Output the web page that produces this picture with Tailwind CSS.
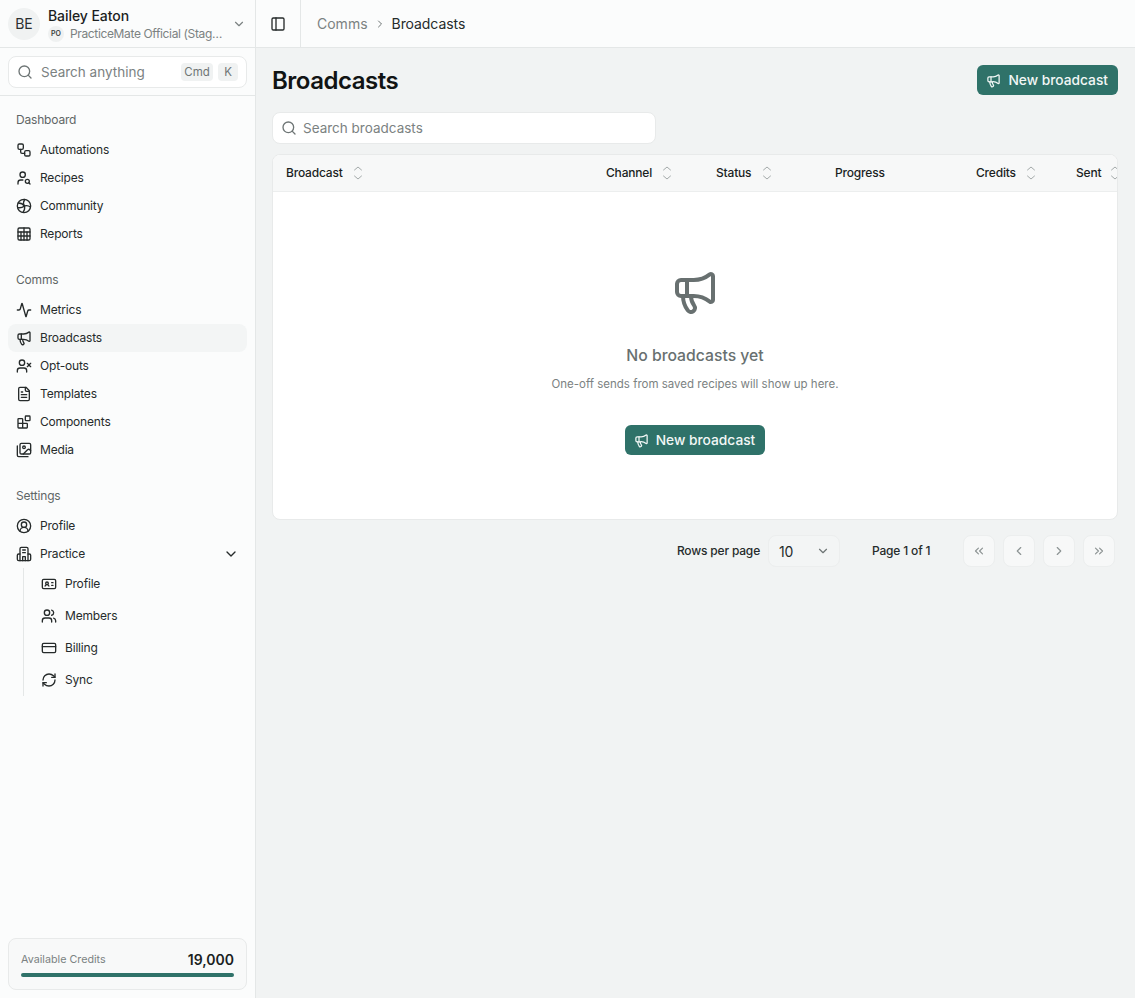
<!DOCTYPE html>
<html lang="en">
<head>
  <meta charset="UTF-8">
  <meta name="viewport" content="width=device-width, initial-scale=1.0">
  <title>Broadcasts</title>
  <script src="https://cdn.jsdelivr.net/npm/@tailwindcss/browser@4"></script>
</head>
<body class="bg-[#f1f3f3] text-[#1b1f1f] font-['Inter','Liberation_Sans',sans-serif] antialiased">
  <div class="flex h-[998px] w-[1135px] overflow-hidden">

    <!-- sidebar -->
    <aside class="flex w-[256px] shrink-0 flex-col border-r border-[#e4e7e7] bg-[#fbfcfc]">
      <div class="flex h-[48px] shrink-0 items-center border-b border-[#e4e7e7] pl-2 pr-[9px]">
        <div class="flex size-[32px] shrink-0 items-center justify-center rounded-full bg-[#f0f2f2] text-[14px] text-[#2b3030]">BE</div>
        <div class="ml-2 min-w-0 flex-1 pt-[3px]">
          <div class="text-[14px] leading-[16px] font-medium tracking-[-0.005em]">Bailey Eaton</div>
          <div class="mt-[2px] flex items-center">
            <span class="flex size-[16px] items-center justify-center rounded-full bg-[#eff1f1] text-[7px] font-semibold text-[#3a4040]">PO</span>
            <span class="ml-[6px] whitespace-nowrap text-[12px] leading-[16px] tracking-[-0.03em] text-[#7b8282]">PracticeMate Official (Stag…</span>
          </div>
        </div>
        <svg class="size-[14px] shrink-0 text-[#7b8282]" viewBox="0 0 24 24" fill="none" stroke="currentColor" stroke-width="2" stroke-linecap="round" stroke-linejoin="round"><path d="m6 9 6 6 6-6"/></svg>
      </div>

      <div class="h-[48px] shrink-0 border-b border-[#e4e7e7] px-2 pt-2">
        <div class="flex h-[32px] items-center rounded-lg border border-[#e8eaea] bg-white pl-2 pr-[8px]">
          <svg class="size-[16px] shrink-0 text-[#6e7575]" viewBox="0 0 24 24" fill="none" stroke="currentColor" stroke-width="2" stroke-linecap="round" stroke-linejoin="round"><circle cx="11" cy="11" r="8"/><path d="m21 21-4.3-4.3"/></svg>
          <span class="ml-2 flex-1 text-[13.5px] text-[#7b8282]">Search anything</span>
          <span class="rounded bg-[#f0f2f2] px-[3.5px] py-px text-[11.5px] leading-[16px] text-[#6e7575]">Cmd</span>
          <span class="ml-[5px] rounded bg-[#f0f2f2] px-[6px] py-px text-[11.5px] leading-[16px] text-[#6e7575]">K</span>
        </div>
      </div>

      <nav class="flex-1 px-2 text-[12px] tracking-[-0.015em] text-[#262b2b]">
        <div class="h-[16px] mt-4 px-2 leading-[16px] text-[#5f6666]">Dashboard</div>
        <ul class="mt-[8px]">
          <li class="flex h-[28px] items-center gap-2 px-2">
            <svg class="size-[16px] shrink-0" viewBox="0 0 24 24" fill="none" stroke="currentColor" stroke-width="2" stroke-linecap="round" stroke-linejoin="round"><rect width="8" height="8" x="3" y="3" rx="2"/><path d="M7 11v4a2 2 0 0 0 2 2h4"/><rect width="8" height="8" x="13" y="13" rx="2"/></svg>
            Automations
          </li>
          <li class="flex h-[28px] items-center gap-2 px-2">
            <svg class="size-[16px] shrink-0" viewBox="0 0 24 24" fill="none" stroke="currentColor" stroke-width="2" stroke-linecap="round" stroke-linejoin="round"><circle cx="10" cy="7" r="4"/><path d="M10.3 15H7a4 4 0 0 0-4 4v2"/><circle cx="17" cy="17" r="3"/><path d="m21 21-1.9-1.9"/></svg>
            Recipes
          </li>
          <li class="flex h-[28px] items-center gap-2 px-2">
            <svg class="size-[16px] shrink-0" viewBox="0 0 24 24" fill="none" stroke="currentColor" stroke-width="2" stroke-linecap="round" stroke-linejoin="round"><circle cx="12" cy="12" r="10"/><path d="M3.5 7.5c3.500 0 7 1.500 9 4.500"/><path d="M12.500 12c-1.500-3-1.500-7 .5-10"/><path d="M12.500 12c3-1 6.500-.5 9 1.500"/><path d="M12.500 12c1 3 .5 6.500-2 9.500"/><path d="M12.500 12c-2.500 2-5.500 3-9 2.500"/></svg>
            Community
          </li>
          <li class="flex h-[28px] items-center gap-2 px-2">
            <svg class="size-[16px] shrink-0" viewBox="0 0 24 24" fill="none" stroke="currentColor" stroke-width="2" stroke-linecap="round" stroke-linejoin="round"><path d="M12 3v18"/><path d="M7.500 9v12"/><path d="M16.500 9v12"/><rect width="18" height="18" x="3" y="3" rx="2"/><path d="M3 9h18"/><path d="M3 15h18"/></svg>
            Reports
          </li>
        </ul>

        <div class="mt-[24px] h-[16px] px-2 leading-[16px] text-[#5f6666]">Comms</div>
        <ul class="mt-[8px]">
          <li class="flex h-[28px] items-center gap-2 px-2">
            <svg class="size-[16px] shrink-0" viewBox="0 0 24 24" fill="none" stroke="currentColor" stroke-width="2" stroke-linecap="round" stroke-linejoin="round"><path d="M22 12h-2.48a2 2 0 0 0-1.93 1.46l-2.35 8.36a.25.25 0 0 1-.48 0L9.24 2.18a.25.25 0 0 0-.48 0l-2.35 8.36A2 2 0 0 1 4.49 12H2"/></svg>
            Metrics
          </li>
          <li class="flex h-[28px] items-center gap-2 rounded-lg bg-[#f3f5f5] px-2">
            <svg class="size-[16px] shrink-0" viewBox="0 0 24 24" fill="none" stroke="currentColor" stroke-width="2" stroke-linecap="round" stroke-linejoin="round"><path d="M11 6a13 13 0 0 0 8.4-2.8A1 1 0 0 1 21 4v12a1 1 0 0 1-1.6.8A13 13 0 0 0 11 14H5a2 2 0 0 1-2-2V8a2 2 0 0 1 2-2z"/><path d="M6 14a12 12 0 0 0 2.4 7.2 2 2 0 0 0 3.2-2.4A8 8 0 0 1 10 14"/><path d="M8 6v8"/></svg>
            Broadcasts
          </li>
          <li class="flex h-[28px] items-center gap-2 px-2">
            <svg class="size-[16px] shrink-0" viewBox="0 0 24 24" fill="none" stroke="currentColor" stroke-width="2" stroke-linecap="round" stroke-linejoin="round"><path d="M16 21v-2a4 4 0 0 0-4-4H6a4 4 0 0 0-4 4v2"/><circle cx="9" cy="7" r="4"/><line x1="17" x2="22" y1="8" y2="13"/><line x1="22" x2="17" y1="8" y2="13"/></svg>
            Opt-outs
          </li>
          <li class="flex h-[28px] items-center gap-2 px-2">
            <svg class="size-[16px] shrink-0" viewBox="0 0 24 24" fill="none" stroke="currentColor" stroke-width="2" stroke-linecap="round" stroke-linejoin="round"><path d="M15 2H6a2 2 0 0 0-2 2v16a2 2 0 0 0 2 2h12a2 2 0 0 0 2-2V7Z"/><path d="M14 2v4a2 2 0 0 0 2 2h4"/><path d="M10 9H8"/><path d="M16 13H8"/><path d="M16 17H8"/></svg>
            Templates
          </li>
          <li class="flex h-[28px] items-center gap-2 px-2">
            <svg class="size-[16px] shrink-0" viewBox="0 0 24 24" fill="none" stroke="currentColor" stroke-width="2" stroke-linecap="round" stroke-linejoin="round"><rect width="7" height="7" x="14" y="3" rx="1"/><path d="M10 21V8a1 1 0 0 0-1-1H4a1 1 0 0 0-1 1v12a1 1 0 0 0 1 1h12a1 1 0 0 0 1-1v-5a1 1 0 0 0-1-1H3"/></svg>
            Components
          </li>
          <li class="flex h-[28px] items-center gap-2 px-2">
            <svg class="size-[16px] shrink-0" viewBox="0 0 24 24" fill="none" stroke="currentColor" stroke-width="2" stroke-linecap="round" stroke-linejoin="round"><path d="M18 22H4a2 2 0 0 1-2-2V6"/><path d="m22 13-1.296-1.296a2.41 2.41 0 0 0-3.408 0L11 18"/><circle cx="12" cy="8" r="2"/><rect width="16" height="16" x="6" y="2" rx="2"/></svg>
            Media
          </li>
        </ul>

        <div class="mt-[24px] h-[16px] px-2 leading-[16px] text-[#5f6666]">Settings</div>
        <ul class="mt-[8px]">
          <li class="flex h-[28px] items-center gap-2 px-2">
            <svg class="size-[16px] shrink-0" viewBox="0 0 24 24" fill="none" stroke="currentColor" stroke-width="2" stroke-linecap="round" stroke-linejoin="round"><path d="M18 20a6 6 0 0 0-12 0"/><circle cx="12" cy="10" r="4"/><circle cx="12" cy="12" r="10"/></svg>
            Profile
          </li>
          <li class="flex h-[28px] items-center gap-2 px-2">
            <svg class="size-[16px] shrink-0" viewBox="0 0 24 24" fill="none" stroke="currentColor" stroke-width="2" stroke-linecap="round" stroke-linejoin="round"><path d="M6 22V4a2 2 0 0 1 2-2h8a2 2 0 0 1 2 2v18Z"/><path d="M6 12H4a2 2 0 0 0-2 2v6a2 2 0 0 0 2 2h2"/><path d="M18 12h2a2 2 0 0 1 2 2v6a2 2 0 0 1-2 2h-2"/><path d="M10 6h4"/><path d="M10 10h4"/><path d="M10 22v-6h4v6"/></svg>
            <span class="flex-1">Practice</span>
            <svg class="size-[16px] shrink-0" viewBox="0 0 24 24" fill="none" stroke="currentColor" stroke-width="2" stroke-linecap="round" stroke-linejoin="round"><path d="m6 9 6 6 6-6"/></svg>
          </li>
        </ul>
        <ul class="ml-[15px] border-l border-[#e4e7e7] pl-[17px]">
          <li class="flex h-[32px] items-center gap-2">
            <svg class="size-[16px] shrink-0" viewBox="0 0 24 24" fill="none" stroke="currentColor" stroke-width="2" stroke-linecap="round" stroke-linejoin="round"><path d="M16 10h2"/><path d="M16 14h2"/><path d="M6.17 15a3 3 0 0 1 5.66 0"/><circle cx="9" cy="11" r="2"/><rect x="2" y="5" width="20" height="14" rx="2"/></svg>
            Profile
          </li>
          <li class="flex h-[32px] items-center gap-2">
            <svg class="size-[16px] shrink-0" viewBox="0 0 24 24" fill="none" stroke="currentColor" stroke-width="2" stroke-linecap="round" stroke-linejoin="round"><path d="M16 21v-2a4 4 0 0 0-4-4H6a4 4 0 0 0-4 4v2"/><circle cx="9" cy="7" r="4"/><path d="M22 21v-2a4 4 0 0 0-3-3.87"/><path d="M16 3.13a4 4 0 0 1 0 7.75"/></svg>
            Members
          </li>
          <li class="flex h-[32px] items-center gap-2">
            <svg class="size-[16px] shrink-0" viewBox="0 0 24 24" fill="none" stroke="currentColor" stroke-width="2" stroke-linecap="round" stroke-linejoin="round"><rect width="20" height="14" x="2" y="5" rx="2"/><line x1="2" x2="22" y1="10" y2="10"/></svg>
            Billing
          </li>
          <li class="flex h-[32px] items-center gap-2">
            <svg class="size-[16px] shrink-0" viewBox="0 0 24 24" fill="none" stroke="currentColor" stroke-width="2" stroke-linecap="round" stroke-linejoin="round"><path d="M3 12a9 9 0 0 1 9-9 9.75 9.75 0 0 1 6.74 2.74L21 8"/><path d="M21 3v5h-5"/><path d="M21 12a9 9 0 0 1-9 9 9.75 9.75 0 0 1-6.74-2.74L3 16"/><path d="M8 16H3v5"/></svg>
            Sync
          </li>
        </ul>
      </nav>

      <div class="mx-2 mb-2 h-[52px] shrink-0 rounded-lg border border-[#e8eaea] bg-[#f8f9f9] px-3 pt-[10px]">
        <div class="flex h-[20px] items-center justify-between">
          <span class="pt-[3px] text-[10.75px] text-[#7b8282]">Available Credits</span>
          <span class="text-[14px] font-semibold text-[#1b1f1f]">19,000</span>
        </div>
        <div class="mt-[4px] h-[4px] rounded-full bg-[#2f7269]"></div>
      </div>
    </aside>

    <!-- main -->
    <main class="min-w-0 flex-1">
      <header class="flex h-[48px] items-center border-b border-[#e4e7e7] bg-[#fbfcfc]">
        <div class="flex h-full w-[45px] items-center justify-center border-r border-[#e4e7e7]">
          <svg class="size-[16px] text-[#262b2b]" viewBox="0 0 24 24" fill="none" stroke="currentColor" stroke-width="2" stroke-linecap="round" stroke-linejoin="round"><rect width="18" height="18" x="3" y="3" rx="2"/><path d="M9 3v18"/></svg>
        </div>
        <div class="ml-4 flex items-center text-[14px]">
          <span class="text-[#7b8282]">Comms</span>
          <svg class="mx-[6px] size-[12px] text-[#6e7575]" viewBox="0 0 24 24" fill="none" stroke="currentColor" stroke-width="2" stroke-linecap="round" stroke-linejoin="round"><path d="m9 18 6-6-6-6"/></svg>
          <span class="tracking-[-0.005em] text-[#262b2b]">Broadcasts</span>
        </div>
      </header>

      <div class="pl-4 pr-[17px]">
        <div class="flex h-[64px] items-center justify-between">
          <h1 class="pt-[2px] text-[24px] font-semibold tracking-[-0.02em] text-[#111414]">Broadcasts</h1>
          <button class="flex h-[30px] items-center gap-[7px] rounded-md bg-[#2f7269] pl-[9px] pr-[10px] text-[13.75px] font-medium text-[#f2f7f6]">
            <svg class="size-[15px]" viewBox="0 0 24 24" fill="none" stroke="currentColor" stroke-width="2" stroke-linecap="round" stroke-linejoin="round"><path d="M11 6a13 13 0 0 0 8.4-2.8A1 1 0 0 1 21 4v12a1 1 0 0 1-1.6.8A13 13 0 0 0 11 14H5a2 2 0 0 1-2-2V8a2 2 0 0 1 2-2z"/><path d="M6 14a12 12 0 0 0 2.4 7.2 2 2 0 0 0 3.2-2.4A8 8 0 0 1 10 14"/><path d="M8 6v8"/></svg>
            New broadcast
          </button>
        </div>

        <div class="flex h-[32px] w-[384px] items-center rounded-lg border border-[#e8eaea] bg-white pl-2">
          <svg class="size-[16px] text-[#6e7575]" viewBox="0 0 24 24" fill="none" stroke="currentColor" stroke-width="2" stroke-linecap="round" stroke-linejoin="round"><circle cx="11" cy="11" r="8"/><path d="m21 21-4.3-4.3"/></svg>
          <span class="ml-[6px] text-[13.5px] text-[#7b8282]">Search broadcasts</span>
        </div>

        <div class="mt-[10px] h-[366px] overflow-hidden rounded-lg border border-[#e8eaea] bg-white">
          <div class="flex h-[37px] items-center border-b border-[#eceeee] bg-[#f7f8f8] text-[12px] tracking-[-0.015em] font-medium text-[#1b1f1f]">
            <div class="flex w-[319px] shrink-0 items-center gap-[9px] pl-[13px]">
              Broadcast
              <svg class="h-[14px] w-[12px] text-[#a3a9a9]" viewBox="0 0 12 14" fill="none" stroke="currentColor" stroke-width="1" stroke-linecap="round" stroke-linejoin="round"><path d="m2.5 4 3.5-3 3.5 3"/><path d="m2.5 10 3.5 3 3.5-3"/></svg>
            </div>
            <div class="flex w-[110px] shrink-0 items-center gap-[9px] pl-[14px]">
              Channel
              <svg class="h-[14px] w-[12px] text-[#a3a9a9]" viewBox="0 0 12 14" fill="none" stroke="currentColor" stroke-width="1" stroke-linecap="round" stroke-linejoin="round"><path d="m2.5 4 3.5-3 3.5 3"/><path d="m2.5 10 3.5 3 3.5-3"/></svg>
            </div>
            <div class="flex w-[119px] shrink-0 items-center gap-[10px] pl-[14px]">
              Status
              <svg class="h-[14px] w-[12px] text-[#a3a9a9]" viewBox="0 0 12 14" fill="none" stroke="currentColor" stroke-width="1" stroke-linecap="round" stroke-linejoin="round"><path d="m2.5 4 3.5-3 3.5 3"/><path d="m2.5 10 3.5 3 3.5-3"/></svg>
            </div>
            <div class="w-[141px] shrink-0 pl-[14px]">Progress</div>
            <div class="flex w-[100px] shrink-0 items-center gap-[9px] pl-[14px]">
              Credits
              <svg class="h-[14px] w-[12px] text-[#a3a9a9]" viewBox="0 0 12 14" fill="none" stroke="currentColor" stroke-width="1" stroke-linecap="round" stroke-linejoin="round"><path d="m2.5 4 3.5-3 3.5 3"/><path d="m2.5 10 3.5 3 3.5-3"/></svg>
            </div>
            <div class="flex w-[100px] shrink-0 items-center gap-2 pl-[14px]">
              Sent
              <svg class="h-[14px] w-[12px] shrink-0 text-[#a3a9a9]" viewBox="0 0 12 14" fill="none" stroke="currentColor" stroke-width="1" stroke-linecap="round" stroke-linejoin="round"><path d="m2.5 4 3.5-3 3.5 3"/><path d="m2.5 10 3.5 3 3.5-3"/></svg>
            </div>
          </div>

          <div class="flex flex-col items-center pt-[76px]">
            <svg class="size-[48px] text-[#687070]" viewBox="0 0 24 24" fill="none" stroke="currentColor" stroke-width="2" stroke-linecap="round" stroke-linejoin="round"><path d="M11 6a13 13 0 0 0 8.4-2.8A1 1 0 0 1 21 4v12a1 1 0 0 1-1.6.8A13 13 0 0 0 11 14H5a2 2 0 0 1-2-2V8a2 2 0 0 1 2-2z"/><path d="M6 14a12 12 0 0 0 2.4 7.2 2 2 0 0 0 3.2-2.4A8 8 0 0 1 10 14"/><path d="M8 6v8"/></svg>
            <div class="mt-[28px] text-[15.75px] leading-[24px] font-medium text-[#687070]">No broadcasts yet</div>
            <div class="mt-[8px] text-[11.5px] leading-[16px] text-[#7b8282]">One-off sends from saved recipes will show up here.</div>
            <button class="mt-[33px] flex h-[30px] items-center gap-[7px] rounded-md bg-[#2f7269] pl-[9px] pr-[10px] text-[13.75px] font-medium text-[#f2f7f6]">
              <svg class="size-[15px]" viewBox="0 0 24 24" fill="none" stroke="currentColor" stroke-width="2" stroke-linecap="round" stroke-linejoin="round"><path d="M11 6a13 13 0 0 0 8.4-2.8A1 1 0 0 1 21 4v12a1 1 0 0 1-1.6.8A13 13 0 0 0 11 14H5a2 2 0 0 1-2-2V8a2 2 0 0 1 2-2z"/><path d="M6 14a12 12 0 0 0 2.4 7.2 2 2 0 0 0 3.2-2.4A8 8 0 0 1 10 14"/><path d="M8 6v8"/></svg>
              New broadcast
            </button>
          </div>
        </div>

        <div class="mt-[15px] flex h-[32px] items-center justify-end pr-[3px] text-[12px] tracking-[-0.015em] font-medium text-[#262b2b]">
          <span>Rows per page</span>
          <div class="ml-2 flex h-[32px] w-[72px] items-center justify-between rounded-lg border border-[#eceeee] bg-[#f3f5f5] pl-[10px] pr-[9px] text-[14px] font-normal">
            10
            <svg class="size-[14px] text-[#6e7575]" viewBox="0 0 24 24" fill="none" stroke="currentColor" stroke-width="2" stroke-linecap="round" stroke-linejoin="round"><path d="m6 9 6 6 6-6"/></svg>
          </div>
          <span class="ml-[32px] w-[91px]">Page 1 of 1</span>
          <div class="flex gap-2 text-[#8d9494]">
            <span class="flex size-[32px] items-center justify-center rounded-lg border border-[#eceeee] bg-[#f7f8f8]"><svg class="size-[14px]" viewBox="0 0 24 24" fill="none" stroke="currentColor" stroke-width="2" stroke-linecap="round" stroke-linejoin="round"><path d="m11 17-5-5 5-5"/><path d="m18 17-5-5 5-5"/></svg></span>
            <span class="flex size-[32px] items-center justify-center rounded-lg border border-[#eceeee] bg-[#f7f8f8]"><svg class="size-[14px]" viewBox="0 0 24 24" fill="none" stroke="currentColor" stroke-width="2" stroke-linecap="round" stroke-linejoin="round"><path d="m15 18-6-6 6-6"/></svg></span>
            <span class="flex size-[32px] items-center justify-center rounded-lg border border-[#eceeee] bg-[#f7f8f8]"><svg class="size-[14px]" viewBox="0 0 24 24" fill="none" stroke="currentColor" stroke-width="2" stroke-linecap="round" stroke-linejoin="round"><path d="m9 18 6-6-6-6"/></svg></span>
            <span class="flex size-[32px] items-center justify-center rounded-lg border border-[#eceeee] bg-[#f7f8f8]"><svg class="size-[14px]" viewBox="0 0 24 24" fill="none" stroke="currentColor" stroke-width="2" stroke-linecap="round" stroke-linejoin="round"><path d="m6 17 5-5-5-5"/><path d="m13 17 5-5-5-5"/></svg></span>
          </div>
        </div>
      </div>
    </main>
  </div>
</body>
</html>
